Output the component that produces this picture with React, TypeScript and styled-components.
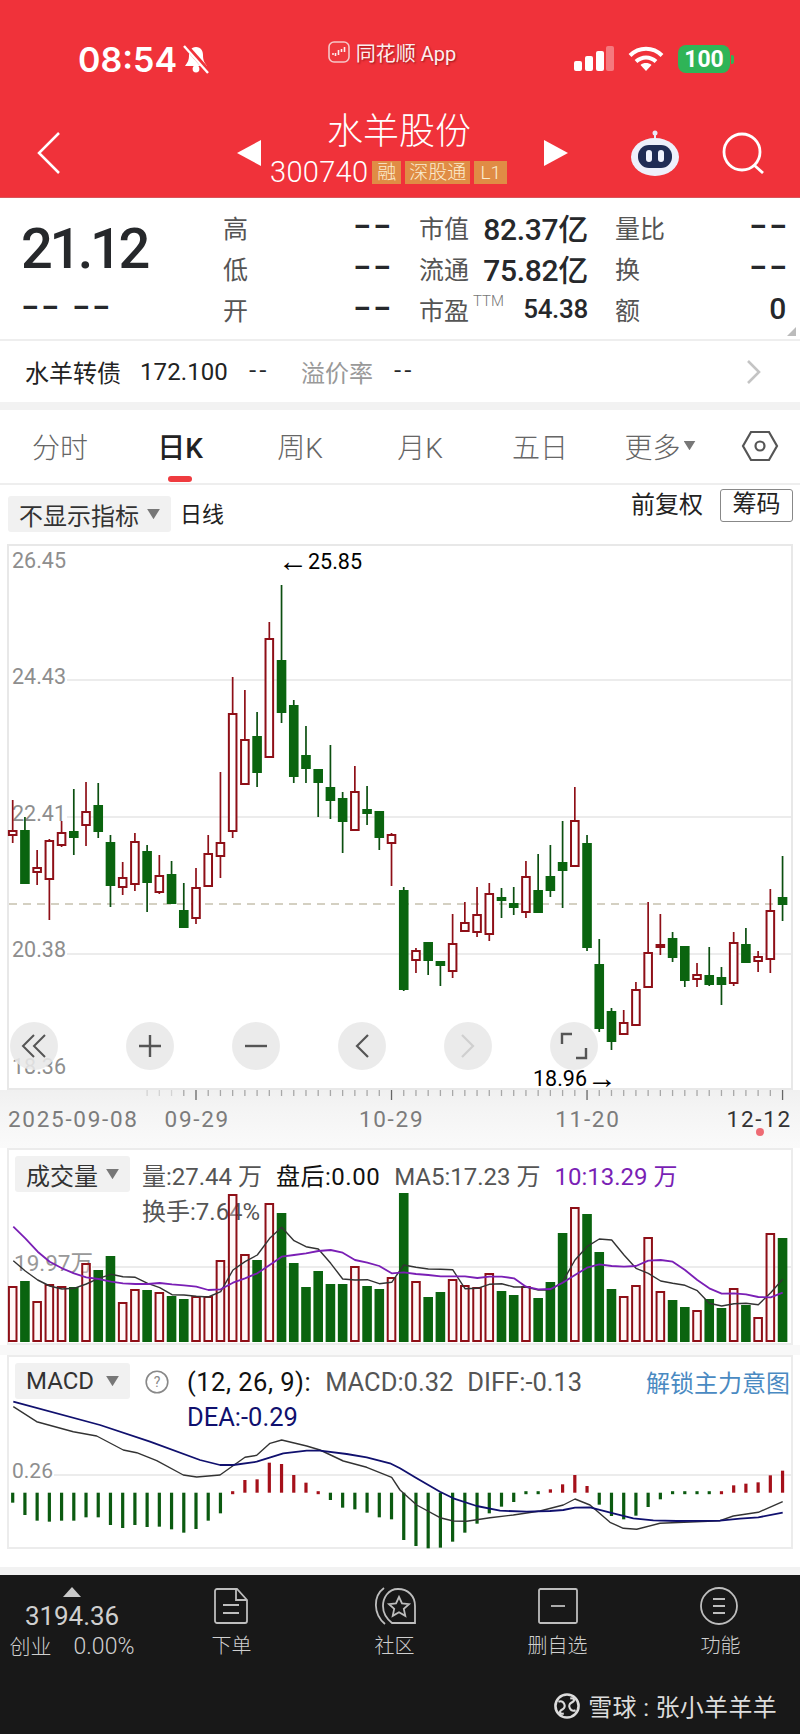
import React from 'react';
import styled, { createGlobalStyle } from 'styled-components';

const SANS = `Roboto, "Noto Sans CJK SC", sans-serif`;
const RED = '#8e0f17';
const GREEN = '#0a640f';

const xAt = (i: number) => 12.7 + 12.22 * i;

// high, body top, body bottom, low, 1 = up (hollow red)
const candles: number[][] = [
  [800, 831, 835, 843, 1], [817, 831, 883, 884, 0], [850, 868, 872, 885, 1], [839, 841, 879, 920, 1],
  [821, 833, 845, 847, 1], [789, 832, 837, 855, 0], [782, 812, 825, 846, 1], [783, 806, 831, 838, 0],
  [835, 843, 885, 907, 0], [862, 878, 887, 895, 1], [833, 842, 884, 891, 1], [845, 852, 882, 912, 0],
  [855, 876, 892, 894, 1], [861, 875, 903, 903, 0], [883, 911, 927, 927, 0], [868, 888, 918, 924, 1],
  [835, 854, 886, 887, 1], [772, 843, 856, 878, 1], [677, 714, 831, 838, 1], [690, 740, 784, 784, 1],
  [712, 737, 772, 787, 0], [622, 639, 757, 757, 1], [585, 661, 712, 723, 0], [700, 706, 776, 783, 0],
  [726, 756, 768, 783, 0], [769, 770, 782, 817, 0], [745, 788, 800, 819, 0], [792, 799, 821, 853, 0],
  [766, 792, 830, 830, 1], [786, 810, 813, 825, 0], [812, 812, 837, 850, 0], [833, 835, 843, 886, 1],
  [887, 891, 989, 991, 0], [948, 951, 960, 973, 1], [943, 943, 960, 975, 0], [961, 962, 965, 986, 0],
  [914, 944, 971, 978, 1], [902, 923, 931, 931, 1], [887, 915, 932, 937, 1], [883, 894, 934, 941, 1],
  [888, 898, 900, 918, 0], [887, 904, 907, 915, 0], [861, 877, 912, 918, 1], [854, 891, 912, 912, 0],
  [845, 877, 890, 897, 0], [821, 863, 870, 908, 0], [787, 821, 866, 866, 1], [835, 844, 947, 951, 0],
  [939, 965, 1028, 1032, 0], [1008, 1012, 1041, 1050, 0], [1010, 1023, 1034, 1034, 1], [982, 990, 1025, 1025, 1],
  [902, 953, 987, 987, 1], [914, 945, 947, 955, 1], [932, 939, 957, 962, 0], [947, 947, 980, 987, 0],
  [963, 975, 979, 987, 1], [947, 976, 984, 986, 0], [967, 978, 984, 1005, 0], [932, 943, 983, 986, 1],
  [928, 945, 962, 963, 0], [951, 957, 961, 972, 1], [889, 911, 959, 973, 1], [856, 898, 904, 921, 0],
];

const volumeTops = [
  1287, 1282, 1302, 1285, 1287, 1288, 1264, 1271, 1257, 1303, 1290, 1291, 1293, 1297, 1300, 1297,
  1297, 1261, 1195, 1255, 1261, 1204, 1214, 1264, 1288, 1272, 1285, 1285, 1267, 1287, 1290, 1278,
  1194, 1282, 1298, 1293, 1280, 1286, 1288, 1274, 1292, 1296, 1287, 1299, 1283, 1234, 1208, 1215,
  1253, 1290, 1297, 1286, 1238, 1292, 1301, 1308, 1311, 1300, 1309, 1289, 1306, 1318, 1234, 1239,
];

const ma5 = [
  [40, 362], [76, 393], [113, 420], [149, 438], [186, 447], [222, 445], [259, 432], [296, 415], [333, 403], [369, 410],
  [406, 412], [443, 430], [479, 443], [516, 464], [552, 465], [589, 469], [625, 471], [662, 455], [699, 390], [735, 365],
  [772, 345], [809, 295], [845, 262], [882, 302], [918, 320], [955, 327], [992, 370], [1028, 417], [1065, 420], [1102, 419],
  [1138, 431], [1175, 427], [1211, 375], [1248, 382], [1285, 387], [1322, 388], [1358, 389], [1395, 446], [1432, 445],
  [1468, 433], [1505, 431], [1542, 441], [1578, 441], [1615, 450], [1652, 450], [1688, 425], [1725, 360], [1761, 320],
  [1798, 297], [1835, 300], [1872, 345], [1908, 385], [1945, 400], [1982, 423], [2018, 430], [2055, 436], [2092, 452],
  [2128, 490], [2165, 498], [2202, 491], [2238, 490], [2275, 494], [2312, 458], [2348, 418],
];

const ma10 = [
  [40, 260], [76, 295], [113, 335], [149, 365], [186, 385], [222, 400], [259, 412], [296, 417], [333, 425], [369, 430],
  [406, 432], [443, 432], [479, 429], [516, 433], [552, 436], [589, 440], [625, 450], [662, 448], [699, 428], [735, 415],
  [772, 400], [809, 375], [845, 350], [882, 345], [918, 340], [955, 333], [992, 330], [1028, 338], [1065, 360], [1102, 368],
  [1138, 378], [1175, 400], [1211, 397], [1248, 402], [1285, 405], [1322, 409], [1358, 409], [1395, 409], [1432, 414],
  [1468, 410], [1505, 410], [1542, 415], [1578, 440], [1615, 448], [1652, 447], [1688, 428], [1725, 405], [1761, 383],
  [1798, 373], [1835, 378], [1872, 380], [1908, 378], [1945, 362], [1982, 360], [2018, 365], [2055, 390], [2092, 420],
  [2128, 445], [2165, 461], [2202, 460], [2238, 463], [2275, 471], [2312, 472], [2348, 458],
];

// bar end for each day, measured against the zero line of the histogram
const macdEnds = [
  458, 495, 512, 515, 512, 512, 502, 502, 525, 534, 525, 531, 530, 538, 548, 537, 512, 490,
  420, 390, 388, 338, 342, 375, 398, 423, 450, 473, 478, 488, 502, 508,
  570, 588, 595, 593, 575, 548, 521, 490, 470, 456, 432, 432, 418, 403, 375, 408,
  464, 498, 508, 497, 471, 448, 435, 435, 432, 432, 426, 406, 401, 397, 376, 362,
];

const dea = [
  [40, 155], [300, 225], [450, 275], [600, 330], [660, 345], [700, 345], [770, 335], [850, 310], [920, 302], [960, 302],
  [1040, 312], [1100, 322], [1170, 340], [1200, 355], [1250, 385], [1320, 425], [1360, 445], [1430, 468], [1500, 482],
  [1580, 485], [1650, 483], [1690, 480], [1725, 473], [1770, 472], [1840, 490], [1900, 505], [1960, 511], [2030, 513],
  [2160, 512], [2220, 506], [2275, 502], [2348, 488],
];

const diff = [
  [40, 170], [110, 215], [220, 245], [290, 258], [370, 300], [410, 308], [470, 332], [550, 375], [590, 381], [660, 375],
  [735, 322], [770, 316], [810, 280], [845, 270], [920, 288], [960, 300], [1030, 333], [1100, 352], [1175, 382], [1200, 420],
  [1250, 465], [1320, 503], [1360, 513], [1400, 514], [1470, 503], [1540, 495], [1620, 483], [1690, 465], [1725, 447],
  [1770, 465], [1830, 517], [1870, 535], [1910, 538], [1980, 520], [2160, 512], [2200, 498], [2275, 487], [2348, 455],
];

const linePoints = (pts: number[][], top: number) =>
  pts.map(([x, y]) => `${(x / 3).toFixed(1)},${(top + y / 3).toFixed(1)}`).join(' ');

const GlobalStyle = createGlobalStyle`
  * { box-sizing: border-box; }
  html, body { margin: 0; padding: 0; background: #fff; }
  body { font-family: ${SANS}; }
`;

const Page = styled.div`
  width: 800px;
  height: 1734px;
  overflow: hidden;
  display: flex;
  flex-direction: column;
  background: #fff;
`;

const Header = styled.header`
  height: 198px;
  background: #f0323a;
  color: #fff;
  border-bottom: 1px solid #d9555a;
`;

const StatusBar = styled.div`
  height: 100px;
  display: grid;
  grid-template-columns: 1fr auto 1fr;
  padding: 0 70px 0 78px;
`;

const Clock = styled.div`
  display: flex;
  align-items: center;
  gap: 5px;
  height: 40px;
  margin-top: 39px;
  font: 600 34px Inter, sans-serif;
`;

const Watermark = styled.div`
  display: flex;
  align-items: center;
  gap: 6px;
  height: 24px;
  margin: 40px 0 0 -24px;
  font-size: 20px;
  opacity: 0.92;
  text-shadow: 1px 1px 2px rgba(80, 0, 0, 0.6);
`;

const StatusRight = styled.div`
  display: flex;
  align-items: center;
  justify-content: flex-end;
  gap: 14px;
  height: 30px;
  margin-top: 44px;
`;

const Battery = styled.div`
  width: 52px;
  height: 28px;
  border-radius: 8px;
  background: #2fb457;
  display: flex;
  align-items: center;
  justify-content: center;
  font: 700 23px Roboto, sans-serif;
  position: relative;

  &::after {
    content: '';
    position: absolute;
    right: -4px;
    top: 10px;
    width: 3px;
    height: 9px;
    border-radius: 0 2px 2px 0;
    background: #2fb457;
  }
`;

const NavBar = styled.div`
  height: 97px;
  display: flex;
  align-items: flex-start;
  padding-left: 37px;
`;

const BackIcon = styled.svg`
  width: 24px;
  height: 42px;
  margin-top: 32px;
`;

const StockSwitch = styled.div`
  display: flex;
  align-items: flex-start;
  margin-left: 176px;
  width: 331px;
`;

const Triangle = styled.div<{ $right?: boolean }>`
  width: 24px;
  height: 26px;
  margin-top: 40px;
  flex: none;
  background: #fff;
  clip-path: ${({ $right }) =>
    $right ? 'polygon(0 0, 100% 50%, 0 100%)' : 'polygon(100% 0, 0 50%, 100% 100%)'};
`;

const StockInfo = styled.div`
  flex: 1;
  padding-left: 9px;
  display: flex;
  flex-direction: column;
`;

const StockName = styled.div`
  font-size: 36px;
  line-height: 44px;
  margin-top: 10px;
  padding-left: 57px;
  font-weight: 300;
`;

const StockCode = styled.div`
  display: flex;
  align-items: center;
  gap: 4px;
  height: 24px;
  margin-top: 6px;
  font-size: 29px;
  letter-spacing: 0.3px;
  font-weight: 300;
`;

const Badge = styled.span<{ $width: number }>`
  width: ${({ $width }) => $width}px;
  height: 23px;
  background: #e08c45;
  color: #fbeccf;
  font-size: 19px;
  letter-spacing: 0;
  line-height: 23px;
  text-align: center;
`;

const NavIcons = styled.div`
  display: flex;
  align-items: flex-start;
  gap: 42px;
  margin-left: 62px;
`;

const RobotIcon = styled.svg`
  width: 50px;
  height: 46px;
  margin-top: 30px;
`;

const SearchIcon = styled.svg`
  width: 42px;
  height: 42px;
  margin-top: 32px;
`;

const Stats = styled.section`
  height: 143px;
  display: grid;
  grid-template-columns: 172px 167px 169px 169px;
  column-gap: 29px;
  padding: 8px 15px 0 22px;
  border-bottom: 2px solid #eee;
  position: relative;

  &::after {
    content: '';
    position: absolute;
    right: 4px;
    bottom: 3px;
    width: 9px;
    height: 9px;
    background: #bbb;
    clip-path: polygon(100% 0, 100% 100%, 0 100%);
  }
`;

const PriceBlock = styled.div`
  display: flex;
  flex-direction: column;
`;

const Price = styled.div`
  font-size: 56px;
  font-weight: 500;
  line-height: 64px;
  letter-spacing: -3.4px;
  color: #26282b;
  margin: 11px 0 0 -1px;
`;

// the app's "--" is far wider than any installed hyphen, so it gets stretched
const Dash = styled.span`
  display: inline-block;
  width: 34px;
  margin-right: 5px;
  text-align: center;
  font: 700 28px 'Liberation Mono', monospace;
  letter-spacing: -5px;
  color: #26282b;
  transform: scaleX(1.7);
`;

const SmallDash = styled.span`
  display: inline-block;
  width: 21px;
  font: 400 22px 'Liberation Mono', monospace;
  letter-spacing: -3px;
  color: #26282b;
`;

const PriceChange = styled.div`
  display: flex;
  gap: 12px;
  margin: 11px 0 0 -3px;
  line-height: 30px;
`;

const StatColumn = styled.div`
  display: flex;
  flex-direction: column;

  &:last-child {
    margin-left: -2px;
  }
`;

const StatRow = styled.div`
  height: 41px;
  display: flex;
  align-items: center;
  justify-content: space-between;
`;

const StatLabel = styled.span`
  font-size: 25px;
  color: #555;
  display: flex;
  align-items: flex-start;
  gap: 4px;
`;

const Ttm = styled.sup`
  font-size: 15px;
  line-height: 20px;
  color: #777;
  font-weight: 300;
  vertical-align: baseline;
`;

const StatValue = styled.span<{ $size?: number }>`
  font-size: ${({ $size }) => $size ?? 30}px;
  font-weight: 500;
  color: #26282b;
  letter-spacing: -0.3px;
`;

const BondRow = styled.div`
  height: 61px;
  display: flex;
  align-items: center;
  padding-left: 25px;
  font-size: 24px;
  color: #222;
`;

const BondPrice = styled.span`
  margin-left: 19px;
  letter-spacing: 0.1px;
  width: 106px;
`;

const BondPremium = styled.span`
  color: #999;
  margin-left: 34px;
  width: 90px;
`;

const BondArrow = styled.svg`
  width: 16px;
  height: 26px;
  margin-left: auto;
  margin-right: 38px;
`;

const BandGap = styled.div`
  height: 8px;
  background: #f2f2f2;
`;

const Tabs = styled.nav`
  height: 75px;
  display: grid;
  grid-template-columns: repeat(6, 120px) 1fr;
  align-items: center;
  padding-bottom: 2px;
  border-bottom: 2px solid #eee;
`;

const Tab = styled.div<{ $active?: boolean }>`
  position: relative;
  height: 100%;
  display: flex;
  align-items: center;
  justify-content: center;
  font-size: 28px;
  font-weight: ${({ $active }) => ($active ? 500 : 300)};
  color: ${({ $active }) => ($active ? '#222' : '#666')};

  &::after {
    content: '';
    display: ${({ $active }) => ($active ? 'block' : 'none')};
    position: absolute;
    left: 48px;
    bottom: -1px;
    width: 24px;
    height: 6px;
    border-radius: 3px;
    background: #ef3b3f;
  }
`;

const Caret = styled.i<{ $size?: number }>`
  display: inline-block;
  width: ${({ $size }) => $size ?? 12}px;
  height: ${({ $size }) => ($size ?? 12) * 0.8}px;
  background: #777;
  clip-path: polygon(0 0, 100% 0, 50% 100%);
  margin-left: 3px;
`;

const HexIcon = styled.svg`
  width: 38px;
  height: 32px;
  margin-left: 21px;
`;

const SubRow = styled.div`
  height: 59px;
  display: flex;
  align-items: flex-start;
  padding: 0 7px 0 8px;
`;

const IndicatorPicker = styled.div<{ $width: number; $offset?: number }>`
  width: ${({ $width }) => $width}px;
  height: 36px;
  margin-top: ${({ $offset }) => $offset ?? 0}px;
  flex: none;
  display: flex;
  align-items: center;
  justify-content: space-between;
  padding: 0 11px;
  border-radius: 3px;
  background: #f1f1f1;
  color: #333;
  font-size: 24px;
`;

const PeriodLabel = styled.span`
  margin: 12px 0 0 9px;
  font-size: 22px;
  line-height: 36px;
  color: #222;
`;

const AdjustLabel = styled.span`
  margin: 2px 17px 0 auto;
  font-size: 24px;
  line-height: 36px;
  color: #222;
`;

const ChipsButton = styled.div`
  width: 73px;
  height: 33px;
  margin-top: 4px;
  border: 1.5px solid #888;
  border-radius: 3px;
  font-size: 24px;
  line-height: 29px;
  text-align: center;
  color: #222;
`;

const ChartFrame = styled.div`
  position: relative;
  height: 546px;
  margin: 0 7px;
  border: 2px solid #e8e8e8;
  border-bottom-width: 2px;
`;

const ChartSvg = styled.svg`
  position: absolute;
  inset: 0;
  width: 100%;
  height: 100%;
  display: block;
  overflow: visible;
`;

const ChartControls = styled.div`
  position: absolute;
  left: 1px;
  top: 476px;
  display: flex;
  gap: 58px;
`;

const RoundButton = styled.div`
  width: 48px;
  height: 48px;
  border-radius: 50%;
  background: rgba(232, 232, 232, 0.88);
  display: flex;
  align-items: center;
  justify-content: center;

  &:first-child {
    margin-right: 10px;
  }
`;

const AxisStrip = styled.div`
  height: 58px;
  padding: 0 7px;
  background: linear-gradient(180deg, #f0f0f0 0%, #f5f5f5 40%, #fafafa 100%);
  position: relative;
`;

const AxisTicks = styled.svg`
  display: block;
  width: 786px;
  height: 10px;
`;

const AxisDates = styled.div`
  display: flex;
  margin-top: 5px;
  font-size: 22.5px;
  line-height: 28px;
  letter-spacing: 1.7px;
  white-space: nowrap;
  color: #777;
`;

const AxisDate = styled.span<{ $gap: number; $dark?: boolean }>`
  flex: none;
  margin-left: ${({ $gap }) => $gap}px;
  color: ${({ $dark }) => ($dark ? '#333' : '#7c7c7c')};
`;

const LatestDot = styled.i`
  position: absolute;
  left: 756px;
  top: 38px;
  width: 8px;
  height: 8px;
  border-radius: 50%;
  background: #ee6b74;
`;

const Panel = styled.section<{ $height: number }>`
  position: relative;
  height: ${({ $height }) => $height}px;
  margin: 0 7px;
  border: 2px solid #ececec;
  padding: 6px 5px 0 6px;
  background: #fff;
  font-size: 24px;
  display: flex;
  align-items: flex-start;
`;

const PanelGap = styled.div`
  height: 10px;
  background: #f8f8f8;
`;

const Legend = styled.div<{ $size?: number; $indent?: number }>`
  display: flex;
  flex-direction: column;
  flex: 1;
  margin-left: ${({ $indent }) => $indent ?? 12}px;
  font-size: ${({ $size }) => $size ?? 24}px;
`;

const LegendLine = styled.div`
  height: 33px;
  margin-top: 2px;
  display: flex;
  align-items: center;
  gap: 14px;
  white-space: nowrap;
`;

const LegendText = styled.span<{ $color?: string; $tracking?: number }>`
  color: ${({ $color }) => $color ?? '#555'};
  letter-spacing: ${({ $tracking }) => $tracking ?? 0}px;
`;

const UnlockLink = styled.span`
  margin: 0 -4px 0 auto;
  font-size: 24px;
  color: #4a8ac2;
`;

const HelpIcon = styled.svg`
  width: 24px;
  height: 24px;
  margin: 7px 0 0 15px;
  flex: none;
`;

const FooterGap = styled.div`
  height: 26px;
  background: #fff;
  border-bottom: 8px solid #f2f2f2;
`;

const BottomBar = styled.footer`
  flex: 1;
  background: #181818;
  color: #cfcfcf;
  display: flex;
  flex-direction: column;
  padding-top: 11px;
`;

const BottomNav = styled.div`
  display: grid;
  grid-template-columns: 150px repeat(4, 163px);
`;

const IndexCell = styled.div`
  width: 144px;
  display: flex;
  flex-direction: column;
  align-items: center;
`;

const IndexUp = styled.i`
  width: 18px;
  height: 10px;
  margin-top: 1px;
  background: #c9c9c9;
  clip-path: polygon(50% 0, 100% 100%, 0 100%);
`;

const IndexValue = styled.div`
  font-size: 26px;
  line-height: 28px;
  margin-top: 5px;
  letter-spacing: -0.1px;
`;

const IndexSub = styled.div`
  display: flex;
  align-items: baseline;
  gap: 22px;
  margin-top: 3px;
  font-size: 21px;
  line-height: 28px;
  font-weight: 300;
`;

const IndexChange = styled.span`
  font-size: 23px;
`;

const BottomItem = styled.div`
  display: flex;
  flex-direction: column;
  align-items: center;
`;

const BottomIcon = styled.svg`
  width: 44px;
  height: 40px;
  color: #bdbdbd;
`;

const BottomLabel = styled.span`
  margin-top: 6px;
  font-size: 20px;
  line-height: 28px;
  font-weight: 300;
`;

const SnowballMark = styled.div`
  margin: 27px 23px 0 0;
  align-self: flex-end;
  display: flex;
  align-items: center;
  gap: 8px;
  font-size: 24px;
  letter-spacing: 0.3px;
  color: #dcdcdc;
`;

const SnowballLogo = styled.svg`
  width: 26px;
  height: 30px;
`;

const BellOffIcon = () => (
  <svg width="28" height="30" viewBox="0 0 28 30">
    <path d="M14 3c-5 0-7 4-7 8 0 5-1 7-4 11h22c-3-4-4-6-4-11 0-4-2-8-7-8z" fill="#fff" />
    <circle cx="14" cy="25" r="3.4" fill="#fff" />
    <path d="M3 1l24 27" stroke="#f0323a" strokeWidth="5" />
    <path d="M2 2l24 27" stroke="#fff" strokeWidth="2.4" />
  </svg>
);

const AppLogo = () => (
  <svg width="22" height="22" viewBox="0 0 22 22">
    <rect x="1" y="1" width="20" height="20" rx="5" fill="#ef3a40" stroke="#f7d5d5" strokeWidth="1.6" />
    <path d="M4 13h2M7.500 12v3M10.500 9v5M13.500 8v3M16.500 6v5" stroke="#fff" strokeWidth="1.6" />
  </svg>
);

const SignalIcon = () => (
  <svg width="40" height="26" viewBox="0 0 40 26">
    <rect x="0" y="15" width="8" height="10" rx="2" fill="#fff" />
    <rect x="11" y="10" width="8" height="15" rx="2" fill="#fff" />
    <rect x="22" y="5" width="8" height="20" rx="2" fill="#fff" />
    <rect x="32" y="0" width="8" height="25" rx="2" fill="#fff" opacity="0.35" />
  </svg>
);

const WifiIcon = () => (
  <svg width="36" height="26" viewBox="0 0 36 26" fill="none" stroke="#fff" strokeWidth="4">
    <path d="M2 9.500C11 .5 25 .5 34 9.500" />
    <path d="M8 15.500c6-5.500 14-5.500 20 0" />
    <path d="M18 25l-5.500-6c3-2.600 8-2.600 11 0z" fill="#fff" stroke="none" />
  </svg>
);

const Candles = () => (
  <g>
    {candles.map(([high, top, bottom, low, up], i) => {
      const color = up ? RED : GREEN;
      const x = xAt(i);
      return (
        <g key={i}>
          <line x1={x} x2={x} y1={high} y2={low} stroke={up ? RED : '#0b4f10'} strokeWidth="1.7" />
          <rect
            x={x - 3.8}
            y={top}
            width="7.6"
            height={Math.max(bottom - top, 1)}
            fill={up ? '#fff' : color}
            stroke={color}
            strokeWidth="2"
          />
        </g>
      );
    })}
  </g>
);

const PriceChart = () => (
  <ChartSvg viewBox="9 546 782 542">
    <g stroke="#e6e6e6" strokeWidth="1.5">
      <line x1="67" x2="791" y1="680" y2="680" />
      <line x1="67" x2="791" y1="817" y2="817" />
      <line x1="67" x2="791" y1="954" y2="954" />
    </g>
    <line x1="9" x2="791" y1="904" y2="904" stroke="#c6c1ae" strokeWidth="1.5" strokeDasharray="8 6" />
    <g fill="#8e8e8e" fontFamily="Roboto, sans-serif" fontSize="21.500">
      <text x="12" y="568">26.45</text>
      <text x="12" y="684">24.43</text>
      <text x="12" y="821">22.41</text>
      <text x="12" y="957">20.38</text>
      <text x="12" y="1074">18.36</text>
    </g>
    <Candles />
    <g fill="#000" fontFamily="Roboto, sans-serif" fontSize="21.500">
      <text x="278" y="569">
        <tspan dy="2" fontFamily="Liberation Sans, sans-serif" fontSize="30">←</tspan>
        <tspan dy="-2">25.85</tspan>
      </text>
      <text x="533" y="1086">
        18.96
        <tspan dy="2" fontFamily="Liberation Sans, sans-serif" fontSize="30">→</tspan>
      </text>
    </g>
  </ChartSvg>
);

const VolumeChart = () => (
  <ChartSvg viewBox="9 1150 782 193">
    <line x1="92" x2="791" y1="1267" y2="1267" stroke="#e6e6e6" strokeWidth="1.5" />
    <text x="14" y="1271" fill="#999" fontFamily={SANS} fontSize="22.500">19.97万</text>
    {volumeTops.map((top, i) => {
      const up = candles[i][4] === 1;
      return (
        <rect
          key={i}
          x={xAt(i) - 3.8}
          y={top}
          width="7.6"
          height={1341 - top}
          fill={up ? 'rgba(255, 235, 235, 0.35)' : GREEN}
          stroke={up ? RED : GREEN}
          strokeWidth="2"
        />
      );
    })}
    <polyline points={linePoints(ma5, 1140)} fill="none" stroke="#333" strokeWidth="1.4" strokeLinejoin="round" />
    <polyline points={linePoints(ma10, 1140)} fill="none" stroke="#7a1fb5" strokeWidth="1.8" strokeLinejoin="round" />
  </ChartSvg>
);

const MacdChart = () => (
  <ChartSvg viewBox="9 1357 782 190">
    <line x1="54" x2="791" y1="1475" y2="1475" stroke="#e6e6e6" strokeWidth="1.5" />
    <text x="12" y="1478" fill="#8e8e8e" fontFamily="Roboto, sans-serif" fontSize="21">0.26</text>
    {macdEnds.map((end, i) => {
      const y = 1350 + end / 3;
      const zero = 1492.7;
      const small = Math.abs(y - zero) < 3;
      const up = y < zero;
      return (
        <rect
          key={i}
          x={xAt(i) - 1.6}
          y={small ? zero - 1.5 : Math.min(y, zero)}
          width="3.2"
          height={small ? 3 : Math.abs(y - zero)}
          fill={up ? '#a5101a' : '#0b5a10'}
        />
      );
    })}
    <polyline points={linePoints(diff, 1350)} fill="none" stroke="#333" strokeWidth="1.4" strokeLinejoin="round" />
    <polyline points={linePoints(dea, 1350)} fill="none" stroke="#10106e" strokeWidth="1.8" strokeLinejoin="round" />
  </ChartSvg>
);

const stockStats = [
  { label: '市值', value: '82.37亿' },
  { label: '流通', value: '75.82亿' },
];

const App = () => {
  const minorTicks = Array.from({ length: 53 }, (_, i) => i + 11);
  const majorIndexes = [15, 31, 47, 63];

  return (
    <Page>
      <GlobalStyle />
      <Header>
        <StatusBar>
          <Clock>
            08:54
            <BellOffIcon />
          </Clock>
          <Watermark>
            <AppLogo />
            同花顺 App
          </Watermark>
          <StatusRight>
            <SignalIcon />
            <WifiIcon />
            <Battery>100</Battery>
          </StatusRight>
        </StatusBar>
        <NavBar>
          <BackIcon viewBox="0 0 24 42" fill="none" stroke="#fff" strokeWidth="2.5">
            <path d="M22 1L2 21l20 20" />
          </BackIcon>
          <StockSwitch>
            <Triangle />
            <StockInfo>
              <StockName>水羊股份</StockName>
              <StockCode>
                300740
                <Badge $width={29}>融</Badge>
                <Badge $width={65}>深股通</Badge>
                <Badge $width={33}>L1</Badge>
              </StockCode>
            </StockInfo>
            <Triangle $right />
          </StockSwitch>
          <NavIcons>
            <RobotIcon viewBox="0 0 50 46">
              <circle cx="25" cy="3" r="2.5" fill="#e9e9f7" />
              <path d="M25 4v6" stroke="#e9e9f7" strokeWidth="2" />
              <ellipse cx="25" cy="27" rx="24" ry="19" fill="#eef0fb" />
              <rect x="8" y="15" width="34" height="23" rx="11" fill="#202c55" />
              <rect x="16" y="20" width="6" height="12" rx="3" fill="#f2f4ff" />
              <rect x="28" y="20" width="6" height="12" rx="3" fill="#f2f4ff" />
            </RobotIcon>
            <SearchIcon viewBox="0 0 42 42" fill="none" stroke="#fff" strokeWidth="2.8">
              <circle cx="20" cy="20" r="18" />
              <path d="M32 33l9 8" />
            </SearchIcon>
          </NavIcons>
        </NavBar>
      </Header>

      <Stats>
        <PriceBlock>
          <Price>21.12</Price>
          <PriceChange>
            <Dash>--</Dash>
            <Dash>--</Dash>
          </PriceChange>
        </PriceBlock>
        <StatColumn>
          {['高', '低', '开'].map((label) => (
            <StatRow key={label}>
              <StatLabel>{label}</StatLabel>
              <Dash>--</Dash>
            </StatRow>
          ))}
        </StatColumn>
        <StatColumn>
          {stockStats.map((stat) => (
            <StatRow key={stat.label}>
              <StatLabel>{stat.label}</StatLabel>
              <StatValue>{stat.value}</StatValue>
            </StatRow>
          ))}
          <StatRow>
            <StatLabel>
              市盈<Ttm>TTM</Ttm>
            </StatLabel>
            <StatValue $size={26}>54.38</StatValue>
          </StatRow>
        </StatColumn>
        <StatColumn>
          <StatRow>
            <StatLabel>量比</StatLabel>
            <Dash>--</Dash>
          </StatRow>
          <StatRow>
            <StatLabel>换</StatLabel>
            <Dash>--</Dash>
          </StatRow>
          <StatRow>
            <StatLabel>额</StatLabel>
            <StatValue>0</StatValue>
          </StatRow>
        </StatColumn>
      </Stats>

      <BondRow>
        水羊转债
        <BondPrice>172.100</BondPrice>
        <SmallDash>--</SmallDash>
        <BondPremium>溢价率</BondPremium>
        <SmallDash>--</SmallDash>
        <BondArrow viewBox="0 0 16 26" fill="none" stroke="#c4c4c4" strokeWidth="2.6">
          <path d="M2 2l11 11L2 24" />
        </BondArrow>
      </BondRow>
      <BandGap />

      <Tabs>
        <Tab>分时</Tab>
        <Tab $active>日K</Tab>
        <Tab>周K</Tab>
        <Tab>月K</Tab>
        <Tab>五日</Tab>
        <Tab>
          更多
          <Caret />
        </Tab>
        <HexIcon viewBox="0 0 38 32" fill="none" stroke="#555" strokeWidth="2.2">
          <path d="M10 2h18l8 14-8 14H10L2 16z" />
          <circle cx="19" cy="16" r="4.500" />
        </HexIcon>
      </Tabs>

      <SubRow>
        <IndicatorPicker $width={163} $offset={11}>
          不显示指标
          <Caret $size={13} />
        </IndicatorPicker>
        <PeriodLabel>日线</PeriodLabel>
        <AdjustLabel>前复权</AdjustLabel>
        <ChipsButton>筹码</ChipsButton>
      </SubRow>

      <ChartFrame>
        <PriceChart />
        <ChartControls>
          <RoundButton>
            <svg width="26" height="24" viewBox="0 0 26 24" fill="none" stroke="#555" strokeWidth="2">
              <path d="M13 1L2 12l11 11M24 1L13 12l11 11" />
            </svg>
          </RoundButton>
          <RoundButton>
            <svg width="24" height="24" viewBox="0 0 24 24" fill="none" stroke="#555" strokeWidth="2.4">
              <path d="M1 12h22M12 1v22" />
            </svg>
          </RoundButton>
          <RoundButton>
            <svg width="24" height="24" viewBox="0 0 24 24" fill="none" stroke="#555" strokeWidth="2.4">
              <path d="M1 12h22" />
            </svg>
          </RoundButton>
          <RoundButton>
            <svg width="16" height="26" viewBox="0 0 16 26" fill="none" stroke="#555" strokeWidth="2.2">
              <path d="M14 2L3 13l11 11" />
            </svg>
          </RoundButton>
          <RoundButton>
            <svg width="16" height="26" viewBox="0 0 16 26" fill="none" stroke="#cfcfcf" strokeWidth="2.2">
              <path d="M2 2l11 11L2 24" />
            </svg>
          </RoundButton>
          <RoundButton>
            <svg width="28" height="28" viewBox="0 0 28 28" fill="none" stroke="#555" strokeWidth="2.4">
              <path d="M12 2H2v10M16 26h10V16" />
            </svg>
          </RoundButton>
        </ChartControls>
      </ChartFrame>

      <AxisStrip>
        <AxisTicks viewBox="7 1090 786 10">
          {minorTicks.map((i) => {
            const major = majorIndexes.includes(i);
            return (
              <line
                key={i}
                x1={xAt(i)}
                x2={xAt(i)}
                y1="1090"
                y2={major ? 1100 : 1096}
                stroke={major ? '#666' : '#a8a8a8'}
                strokeOpacity={i < 14 ? 0.4 : 1}
                strokeWidth="1.3"
              />
            );
          })}
        </AxisTicks>
        <AxisDates>
          <AxisDate $gap={1}>2025-09-08</AxisDate>
          <AxisDate $gap={26}>09-29</AxisDate>
          <AxisDate $gap={129}>10-29</AxisDate>
          <AxisDate $gap={131}>11-20</AxisDate>
          <AxisDate $gap={106} $dark>12-12</AxisDate>
        </AxisDates>
        <LatestDot />
      </AxisStrip>

      <Panel $height={197}>
        <IndicatorPicker $width={115}>
          成交量
          <Caret $size={13} />
        </IndicatorPicker>
        <Legend>
          <LegendLine>
            <LegendText>量:27.44 万</LegendText>
            <LegendText $color="#111" $tracking={0.5}>盘后:0.00</LegendText>
            <LegendText>MA5:17.23 万</LegendText>
            <LegendText $color="#7a1fb5">10:13.29 万</LegendText>
          </LegendLine>
          <LegendLine>
            <LegendText>换手:7.64%</LegendText>
          </LegendLine>
        </Legend>
        <VolumeChart />
      </Panel>
      <PanelGap />
      <Panel $height={194}>
        <IndicatorPicker $width={115}>
          MACD
          <Caret $size={13} />
        </IndicatorPicker>
        <HelpIcon viewBox="0 0 24 24" fill="none" stroke="#888" strokeWidth="1.6">
          <circle cx="12" cy="12" r="10.800" />
          <text x="12" y="17" textAnchor="middle" fontSize="14" fill="#888" stroke="none" fontFamily="Roboto, sans-serif">?</text>
        </HelpIcon>
        <Legend $size={25.5} $indent={18}>
          <LegendLine>
            <LegendText $color="#111" $tracking={0.5}>(12, 26, 9):</LegendText>
            <LegendText>MACD:0.32</LegendText>
            <LegendText>DIFF:-0.13</LegendText>
            <UnlockLink>解锁主力意图</UnlockLink>
          </LegendLine>
          <LegendLine>
            <LegendText $color="#10106e">DEA:-0.29</LegendText>
          </LegendLine>
        </Legend>
        <MacdChart />
      </Panel>
      <FooterGap />

      <BottomBar>
        <BottomNav>
          <IndexCell>
            <IndexUp />
            <IndexValue>3194.36</IndexValue>
            <IndexSub>
              <span>创业</span>
              <IndexChange>0.00%</IndexChange>
            </IndexSub>
          </IndexCell>
          <BottomItem>
            <BottomIcon viewBox="0 0 44 40" fill="none" stroke="currentColor" strokeWidth="1.8">
              <path d="M7 3h20l10 11v21a2 2 0 0 1-2 2H7a2 2 0 0 1-2-2V5a2 2 0 0 1 2-2z" />
              <path d="M26 3v11h11M13 19h16M13 27h16" />
            </BottomIcon>
            <BottomLabel>下单</BottomLabel>
          </BottomItem>
          <BottomItem>
            <BottomIcon viewBox="0 0 44 40" fill="none" stroke="currentColor" strokeWidth="1.8">
              <path d="M25 3C15 3 10 12 10 20c0 8 4 13 9 17h23V20C42 10 35 3 25 3z" />
              <path d="M11 2C0 10 0 28 12 38" />
              <path d="M26 11l3 6.500 7 .7-5.200 4.700 1.500 7-6.300-3.600-6.300 3.600 1.500-7-5.200-4.700 7-.7z" />
            </BottomIcon>
            <BottomLabel>社区</BottomLabel>
          </BottomItem>
          <BottomItem>
            <BottomIcon viewBox="0 0 44 40" fill="none" stroke="currentColor" strokeWidth="1.8">
              <rect x="3" y="3" width="38" height="34" rx="1.500" />
              <path d="M15 20h14" />
            </BottomIcon>
            <BottomLabel>删自选</BottomLabel>
          </BottomItem>
          <BottomItem>
            <BottomIcon viewBox="0 0 44 40" fill="none" stroke="currentColor" strokeWidth="1.8">
              <circle cx="20" cy="20" r="18" />
              <path d="M14 13h12M14 20h12M14 27h12" />
            </BottomIcon>
            <BottomLabel>功能</BottomLabel>
          </BottomItem>
        </BottomNav>
        <SnowballMark>
          <SnowballLogo viewBox="0 0 24 28" fill="none" stroke="#dcdcdc" strokeWidth="2.4">
            <circle cx="12" cy="14" r="10.800" />
            <path d="M4 10c5-2 8 5 4 7s-3 5 1 4M20 18c-5 2-8-5-4-7s3-5-1-4" strokeWidth="2" />
          </SnowballLogo>
          雪球 : 张小羊羊羊
        </SnowballMark>
      </BottomBar>
    </Page>
  );
};

export default App;
